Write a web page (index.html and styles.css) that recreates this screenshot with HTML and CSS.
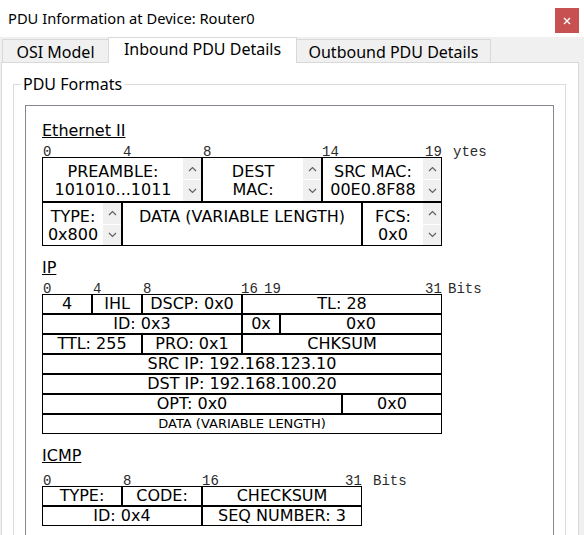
FILE: index.html
```html
<!DOCTYPE html>
<html>
<head>
<meta charset="utf-8">
<link rel="stylesheet" href="styles.css">
</head>
<body>
<div class="titlebar">
  <span class="title">PDU Information at Device: Router0</span>
  <div class="close"><svg width="8" height="8" viewBox="0 0 8 8"><path d="M1 1 L7 7 M7 1 L1 7" stroke="#fff" stroke-width="1.4" fill="none"/></svg></div>
</div>
<div class="tabs">
  <div class="tab t1">OSI Model</div>
  <div class="tab sel">Inbound PDU Details</div>
  <div class="tab t3">Outbound PDU Details</div>
</div>
<div class="pane">
  <fieldset class="group">
    <legend>PDU Formats</legend>
    <div class="panel">
      <div class="heading">Ethernet II</div>
      <div class="ruler">
        <span class="rw80">0</span><span class="rw80">4</span><span class="rw119">8</span><span class="rw103">14</span><span class="rw28">19</span><span>ytes</span>
      </div>
      <div class="tbl">
        <div class="row h45">
          <div class="cell spin c160"><div class="txt">PREAMBLE:<br>101010...1011</div><div class="spinner"><span class="up"><svg width="9" height="6" viewBox="0 0 9 6"><polyline points="1,5 4.5,1.5 8,5" fill="none" stroke="#606060" stroke-width="1.2"/></svg></span><span class="dn"><svg width="9" height="6" viewBox="0 0 9 6"><polyline points="1,1 4.5,4.5 8,1" fill="none" stroke="#606060" stroke-width="1.2"/></svg></span></div></div>
          <div class="cell spin c120"><div class="txt">DEST<br>MAC:</div><div class="spinner"><span class="up"><svg width="9" height="6" viewBox="0 0 9 6"><polyline points="1,5 4.5,1.5 8,5" fill="none" stroke="#606060" stroke-width="1.2"/></svg></span><span class="dn"><svg width="9" height="6" viewBox="0 0 9 6"><polyline points="1,1 4.5,4.5 8,1" fill="none" stroke="#606060" stroke-width="1.2"/></svg></span></div></div>
          <div class="cell spin c120"><div class="txt">SRC MAC:<br>00E0.8F88</div><div class="spinner"><span class="up"><svg width="9" height="6" viewBox="0 0 9 6"><polyline points="1,5 4.5,1.5 8,5" fill="none" stroke="#606060" stroke-width="1.2"/></svg></span><span class="dn"><svg width="9" height="6" viewBox="0 0 9 6"><polyline points="1,1 4.5,4.5 8,1" fill="none" stroke="#606060" stroke-width="1.2"/></svg></span></div></div>
        </div>
        <div class="row h44">
          <div class="cell spin c80"><div class="txt">TYPE:<br>0x800</div><div class="spinner"><span class="up"><svg width="9" height="6" viewBox="0 0 9 6"><polyline points="1,5 4.5,1.5 8,5" fill="none" stroke="#606060" stroke-width="1.2"/></svg></span><span class="dn"><svg width="9" height="6" viewBox="0 0 9 6"><polyline points="1,1 4.5,4.5 8,1" fill="none" stroke="#606060" stroke-width="1.2"/></svg></span></div></div>
          <div class="cell top c240"><div class="txt">DATA (VARIABLE LENGTH)</div></div>
          <div class="cell spin c80"><div class="txt">FCS:<br>0x0</div><div class="spinner"><span class="up"><svg width="9" height="6" viewBox="0 0 9 6"><polyline points="1,5 4.5,1.5 8,5" fill="none" stroke="#606060" stroke-width="1.2"/></svg></span><span class="dn"><svg width="9" height="6" viewBox="0 0 9 6"><polyline points="1,1 4.5,4.5 8,1" fill="none" stroke="#606060" stroke-width="1.2"/></svg></span></div></div>
        </div>
      </div>

      <div class="heading gap">IP</div>
      <div class="ruler">
        <span class="rw50">0</span><span class="rw50">4</span><span class="rw98">8</span><span class="rw23">16</span><span class="rw161">19</span><span class="rw23">31</span><span>Bits</span>
      </div>
      <div class="tbl">
        <div class="row h20">
          <div class="cell c50">4</div><div class="cell c50">IHL</div><div class="cell c100">DSCP: 0x0</div><div class="cell c200">TL: 28</div>
        </div>
        <div class="row h20">
          <div class="cell c200">ID: 0x3</div><div class="cell c38">0x</div><div class="cell c162">0x0</div>
        </div>
        <div class="row h20">
          <div class="cell c100">TTL: 255</div><div class="cell c100">PRO: 0x1</div><div class="cell c200">CHKSUM</div>
        </div>
        <div class="row h20">
          <div class="cell c400">SRC IP: 192.168.123.10</div>
        </div>
        <div class="row h20">
          <div class="cell c400">DST IP: 192.168.100.20</div>
        </div>
        <div class="row h20">
          <div class="cell c300">OPT: 0x0</div><div class="cell c100">0x0</div>
        </div>
        <div class="row h20">
          <div class="cell c400 small">DATA (VARIABLE LENGTH)</div>
        </div>
      </div>

      <div class="heading gap">ICMP</div>
      <div class="ruler wide">
        <span class="rw80">0</span><span class="rw79">8</span><span class="rw143">16</span><span class="rw28">31</span><span>Bits</span>
      </div>
      <div class="tbl">
        <div class="row h20">
          <div class="cell c80">TYPE:</div><div class="cell c80">CODE:</div><div class="cell c160">CHECKSUM</div>
        </div>
        <div class="row h20">
          <div class="cell c160">ID: 0x4</div><div class="cell c160">SEQ NUMBER: 3</div>
        </div>
      </div>
    </div>
  </fieldset>
</div>
</body>
</html>
```

FILE: styles.css
```css
html, body {
  margin: 0;
  padding: 0;
}
body {
  width: 584px;
  height: 535px;
  overflow: hidden;
  background: #f0f0f0;
  font-family: "Noto Sans", sans-serif;
  color: #000;
}
.titlebar {
  height: 37px;
  background: #fff;
  display: flex;
  justify-content: space-between;
  align-items: flex-start;
}
.title {
  font-size: 14.7px;
  line-height: 37px;
  padding-left: 8px;
}
.close {
  width: 24px;
  height: 25px;
  margin: 8px 5px 0 0;
  background: #c75050;
  display: flex;
  align-items: center;
  justify-content: center;
}
.close svg { display: block; }

.tabs {
  height: 25px;
  display: flex;
  align-items: flex-end;
  padding-left: 2px;
}
.tab {
  box-sizing: border-box;
  border: 1px solid #d9d9d9;
  border-bottom: 0;
  background: #f0f0f0;
  height: 23px;
  text-align: center;
  font-size: 16px;
  line-height: 22px;
  padding-top: 1px;
}
.t1 { width: 107px; }
.sel {
  width: 189px;
  margin-left: -1px;
  height: 26px;
  margin-bottom: -1px;
  background: #fff;
  position: relative;
  z-index: 1;
  padding-top: 0;
}
.t3 { width: 195px; margin-left: -1px; }

.pane {
  box-sizing: border-box;
  margin-left: 1px;
  width: 578px;
  height: 520px;
  border: 1px solid #d9d9d9;
  background: #fff;
  padding: 10px 12px 0 11px;
}
.group {
  margin: 0;
  border: 1px solid #dcdcdc;
  padding: 10px 11px 0 11px;
  min-width: 0;
  height: 600px;
}
.group legend {
  font-size: 16px;
  line-height: 22px;
  padding: 0 2px;
  margin-left: -4px;
}
.panel {
  border: 1px solid #828790;
  background: #fff;
  height: 600px;
  padding: 16px 0 0 16px;
}
.heading {
  font-family: "DejaVu Sans", Verdana, sans-serif;
  font-size: 16px;
  line-height: 18px;
  height: 18px;
  text-decoration: underline;
}
.heading.gap { margin-top: 13px; }
.ruler {
  display: flex;
  font-family: "Liberation Mono", "Courier New", monospace;
  font-size: 14px;
  line-height: 10px;
  height: 10px;
  margin-top: 7px;
  padding-left: 1px;
  color: #2a2a2a;
  white-space: pre;
}
.ruler.wide { margin-top: 11px; }
.rw23 { width: 23px; }
.rw28 { width: 28px; }
.rw50 { width: 50px; }
.rw79 { width: 79px; }
.rw80 { width: 80px; }
.rw98 { width: 98px; }
.rw103 { width: 103px; }
.rw119 { width: 119px; }
.rw143 { width: 143px; }
.rw161 { width: 161px; }

.tbl {
  display: flex;
  flex-direction: column;
  font-family: "DejaVu Sans", Verdana, sans-serif;
  font-size: 16px;
  line-height: 18px;
}
.row { display: flex; }
.h45 { height: 45px; }
.h44 { height: 44px; }
.h20 { height: 20px; }
.cell {
  box-sizing: border-box;
  border: 1px solid #000;
  text-align: center;
  white-space: nowrap;
}
.cell.small { font-size: 13px; }
.c38 { width: 38px; }
.c50 { width: 50px; }
.c80 { width: 80px; }
.c100 { width: 100px; }
.c120 { width: 120px; }
.c160 { width: 160px; }
.c162 { width: 162px; }
.c200 { width: 200px; }
.c240 { width: 240px; }
.c300 { width: 300px; }
.c400 { width: 400px; }
.spin, .top { display: flex; }
.txt {
  flex: 1;
  padding-top: 5px;
  text-align: center;
}
.spinner {
  width: 18px;
  display: flex;
  flex-direction: column;
  gap: 1px;
  background: #fff;
}
.spinner span {
  flex: 1;
  background: #f0f0f0;
  display: flex;
  align-items: center;
  justify-content: center;
}
.spinner svg { display: block; }
```
